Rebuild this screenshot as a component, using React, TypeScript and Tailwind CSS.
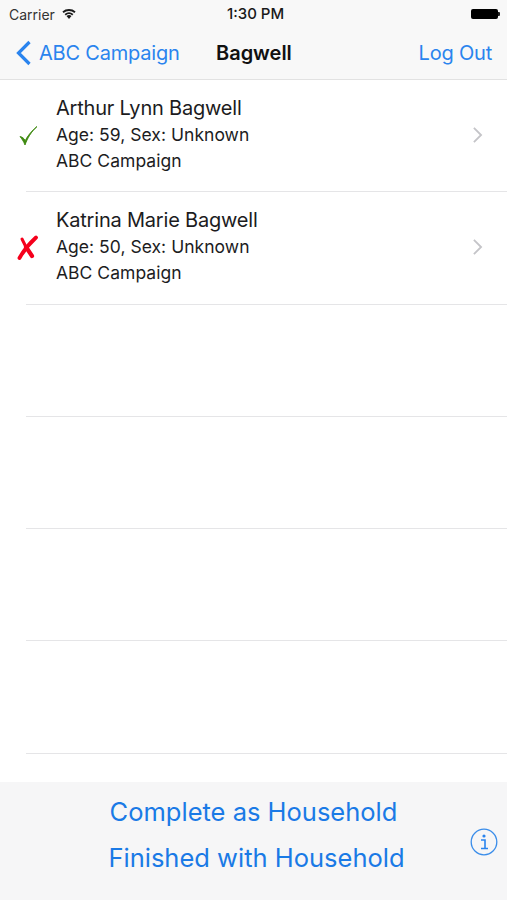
const BLUE = "text-[#2a84ee]";

function Row({ name, age, ok }: { name: string; age: string; ok: boolean }) {
  return (
    <div className="relative flex h-[112.3px] items-center pl-[26px]">
      <div className="absolute left-[15px] top-[41px] h-[28px] w-[28px]">
        {ok ? (
          <svg viewBox="0 0 28 28" className="h-[28px] w-[28px]" fill="none">
            <path d="M5 15.5 C6.5 17.5 8.5 20 10 24 C12.5 17 16 11 22 5.5 C16.5 10 12.5 15 10.3 19.5 C9 17.5 7.5 16 5 15.5 Z" fill="#3f8a12" stroke="#3f8a12" strokeWidth="0.9" strokeLinejoin="round" />
          </svg>
        ) : (
          <svg viewBox="0 0 28 28" className="h-[28px] w-[28px]" fill="none">
            <path d="M7 6 C8.5 9 10 12 11.5 15" stroke="#f5001c" strokeWidth="3" strokeLinecap="round" />
            <path d="M21 4.5 C15 10 9 17 4.5 25" stroke="#f5001c" strokeWidth="3.8" strokeLinecap="round" />
            <path d="M11 14 C13 17 15 20 17 23" stroke="#f5001c" strokeWidth="4.2" strokeLinecap="round" />
          </svg>
        )}
      </div>
      <div className="flex h-full flex-1 items-center border-b border-[#e5e5e7] pb-[2px]">
        <div className="ml-[30px] flex flex-1 flex-col text-[#1c1c1e]">
          <div className="text-[20px] leading-[27px] tracking-[-0.2px]">{name}</div>
          <div className="text-[17.5px] leading-[26px] tracking-[0.03px]">{age}</div>
          <div className="text-[17.5px] leading-[26px] tracking-[0.03px]">ABC Campaign</div>
        </div>
        <svg viewBox="0 0 12 20" className="mr-[24px] h-[18px] w-[11px]" fill="none">
          <path d="M2 2 L10 10 L2 18" stroke="#c4c4c8" strokeWidth="2" />
        </svg>
      </div>
    </div>
  );
}

function EmptyRow() {
  return (
    <div className="flex h-[112.3px] pl-[26px]">
      <div className="flex-1 border-b border-[#e5e5e7]" />
    </div>
  );
}

export default function App() {
  return (
    <div className="flex h-[900px] w-[507px] flex-col overflow-hidden bg-white font-['Inter',sans-serif]">
      <header className="h-[80px] border-b border-[#e2e2e2] bg-[#f8f8f8]">
        <div className="relative flex h-[28px] items-center justify-between pl-[9px] pr-[7px] text-[#1a1a1a]">
          <div className="flex items-center gap-[6px]">
            <span className="text-[14px] text-[#333]">Carrier</span>
            <svg viewBox="0 0 16 12" className="mb-[3px] h-[12px] w-[16px]">
              <path d="M8 12 L5.5 9 A4 4 0 0 1 10.5 9 Z M3.6 7 A7 7 0 0 1 12.4 7 L11.2 8.4 A5 5 0 0 0 4.8 8.4 Z M1.4 4.6 A10 10 0 0 1 14.6 4.6 L13.4 6 A8.2 8.2 0 0 0 2.6 6 Z" fill="#1a1a1a" />
            </svg>
          </div>
          <span className="absolute left-[227px] text-[15px] font-medium">1:30 PM</span>
          <div className="flex items-center">
            <div className="h-[10px] w-[27px] rounded-[2px] bg-black" />
            <div className="h-[4px] w-[2px] rounded-r-[1px] bg-[#222]" />
          </div>
        </div>
        <div className="relative flex h-[49px] items-center justify-between pl-[15px] pr-[15px] text-[20px]">
          <div className={`flex items-center gap-[7px] ${BLUE}`}>
            <svg viewBox="0 0 17 26" className="h-[26px] w-[17px]" fill="none">
              <path d="M14.5 2 L3.5 13 L14.5 24" stroke="#2a84ee" strokeWidth="3.2" />
            </svg>
            <span className="tracking-[-0.2px]">ABC Campaign</span>
          </div>
          <span className="absolute left-[216px] font-semibold tracking-[-0.02px] text-[#111]">Bagwell</span>
          <span className={`tracking-[-0.2px] ${BLUE}`}>Log Out</span>
        </div>
      </header>
      <main className="flex-1">
        <Row name="Arthur Lynn Bagwell" age="Age: 59, Sex: Unknown" ok />
        <Row name="Katrina Marie Bagwell" age="Age: 50, Sex: Unknown" ok={false} />
        <EmptyRow />
        <EmptyRow />
        <EmptyRow />
        <EmptyRow />
      </main>
      <footer className="relative flex h-[118px] flex-col items-center bg-[#f6f6f7] pt-[7px] text-[25.5px] leading-[46px] text-[#1a7ae6]">
        <span>Complete as Household</span>
        <span className="ml-[6px]">Finished with Household</span>
        <svg viewBox="0 0 28 28" className="absolute left-[470px] top-[46px] h-[28px] w-[28px]" fill="none">
          <circle cx="14" cy="14" r="12.8" stroke="#3a8dea" strokeWidth="1.3" />
          <circle cx="14" cy="8" r="1.6" fill="#2a84ee" />
          <path d="M11 12 H15 V20 M11 20.5 H18" stroke="#2a84ee" strokeWidth="1.6" />
        </svg>
      </footer>
    </div>
  );
}
